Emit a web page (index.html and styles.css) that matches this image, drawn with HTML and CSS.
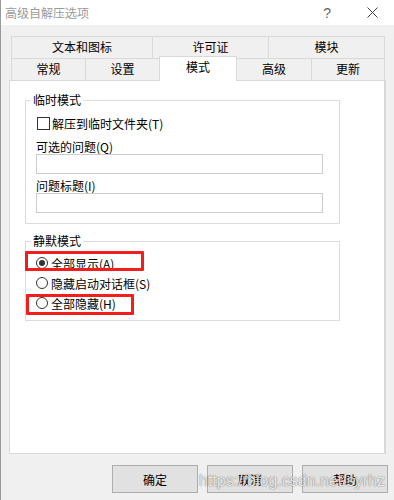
FILE: index.html
```html
<!DOCTYPE html>
<html lang="zh-CN">
<head>
  <meta charset="UTF-8" />
  <title>高级自解压选项</title>
  <link rel="stylesheet" href="styles.css">
</head>
<body>
  <div class="window">
    <div class="titlebar">
      <span class="title">高级自解压选项</span>
      <span class="help">?</span>
      <svg class="close" width="11" height="11" viewBox="0 0 11 11">
        <path d="M0.5 0.5 L10.5 10.5 M10.5 0.5 L0.5 10.5" stroke="#444" stroke-width="1" fill="none" />
      </svg>
    </div>

    <div class="dialog">
      <div class="tab-row">
        <div class="tab w141">文本和图标</div>
        <div class="tab w116">许可证</div>
        <div class="tab w116">模块</div>
      </div>
      <div class="tab-row">
        <div class="tab w74">常规</div>
        <div class="tab w74">设置</div>
        <div class="tab active">模式</div>
        <div class="tab w74">高级</div>
        <div class="tab w73">更新</div>
      </div>

      <div class="panel">
        <fieldset class="group">
          <legend>临时模式</legend>
          <div class="check-row">
            <span class="checkbox"></span>
            <span>解压到临时文件夹(T)</span>
          </div>
          <div class="field-label first">可选的问题(Q)</div>
          <div class="text-input"></div>
          <div class="field-label">问题标题(I)</div>
          <div class="text-input"></div>
        </fieldset>

        <fieldset class="group silent">
          <legend>静默模式</legend>
          <div class="radio-row">
            <span class="radio checked"></span>
            <span>全部显示(A)</span>
            <span class="mark mark-a"></span>
          </div>
          <div class="radio-row">
            <span class="radio"></span>
            <span>隐藏启动对话框(S)</span>
          </div>
          <div class="radio-row">
            <span class="radio"></span>
            <span>全部隐藏(H)</span>
            <span class="mark mark-h"></span>
          </div>
        </fieldset>
      </div>

      <div class="buttons">
        <button>确定</button>
        <button>取消</button>
        <button>帮助</button>
      </div>
    </div>

    <!-- blog watermark stamped over the screenshot -->
    <div class="watermark">https://blog.csdn.net/syrhz</div>
  </div>
</body>
</html>
```

FILE: styles.css
```css
body {
  margin: 0;
  font-family: "Noto Sans CJK SC", "Liberation Sans", sans-serif;
  font-size: 12px;
  color: #000;
}
.window {
  position: relative;
  width: 394px;
  height: 500px;
  box-sizing: border-box;
  border-left: 1px solid #9a9a9a;
  background: #f0f0f0;
  overflow: hidden;
}
.titlebar {
  height: 25px;
  background: #fff;
  display: flex;
  align-items: center;
  padding-left: 4px;
}
.title {
  flex: 1;
  color: #9a9a9a;
  line-height: 16px;
}
.help {
  font-family: "Liberation Sans", sans-serif;
  font-size: 14px;
  color: #666;
  margin-right: 36px;
}
.close {
  margin-right: 16px;
}
.dialog {
  padding: 11px 0 0 8px;
}
.tab-row {
  display: flex;
  margin-left: 2px;
  width: 373px;
  height: 22px;
  border-right: 1px solid #d9d9d9;
}
.tab {
  box-sizing: border-box;
  height: 22px;
  border-top: 1px solid #d9d9d9;
  border-left: 1px solid #d9d9d9;
  text-align: center;
  line-height: 20px;
}
.w141 { width: 141px; }
.w116 { width: 116px; }
.w74 { width: 74px; }
.w73 { width: 73px; }
.tab.active {
  position: relative;
  z-index: 1;
  width: 78px;
  height: 25px;
  margin-top: -2px;
  margin-bottom: -1px;
  background: #fff;
  border-right: 1px solid #d9d9d9;
}
.tab.active + .tab {
  border-left: none;
}
.panel {
  width: 377px;
  height: 374px;
  box-sizing: border-box;
  background: #fff;
  border: 1px solid #d9d9d9;
  border-right-width: 2px;
  padding: 11px 0 0 15px;
}
.group {
  margin: 0;
  width: 315px;
  box-sizing: border-box;
  border: 1px solid #dcdcdc;
  padding: 0 10px 10px 10px;
}
.group legend {
  margin-left: -5px;
  padding: 0 2px;
  line-height: 16px;
}
.check-row {
  display: flex;
  align-items: center;
  height: 16px;
  margin-top: 7px;
}
.checkbox {
  width: 11px;
  height: 11px;
  border: 1px solid #333;
  margin: 0 2px 0 1px;
}
.field-label {
  height: 15px;
  line-height: 15px;
  margin-top: 4px;
}
.field-label.first {
  margin-top: 8px;
}
.text-input {
  width: 287px;
  height: 20px;
  box-sizing: border-box;
  border: 1px solid #cccccc;
}
.group.silent {
  margin-top: 9px;
  padding-bottom: 7px;
}
.radio-row {
  position: relative;
  display: flex;
  align-items: center;
  height: 20px;
}
.radio-row:first-of-type {
  margin-top: 4px;
}
.radio {
  width: 10px;
  height: 10px;
  border: 1px solid #333;
  border-radius: 50%;
  margin-right: 3px;
  display: flex;
  align-items: center;
  justify-content: center;
}
.radio.checked::after {
  content: "";
  width: 6px;
  height: 6px;
  border-radius: 50%;
  background: #333;
}
.mark {
  position: absolute;
  border: 3px solid #f21d1d;
  border-radius: 1px;
  box-sizing: border-box;
}
.mark-a {
  left: -11px;
  top: -2px;
  width: 119px;
  height: 20px;
}
.mark-h {
  left: -10px;
  top: 1px;
  width: 108px;
  height: 21px;
}
.buttons {
  display: flex;
  justify-content: flex-end;
  gap: 9px;
  margin-top: 11px;
  padding-right: 6px;
}
button {
  width: 86px;
  height: 28px;
  background: #e1e1e1;
  border: 1px solid #adadad;
  font-family: "Noto Sans CJK SC", "Liberation Sans", sans-serif;
  font-size: 12px;
  color: #000;
  padding: 0;
}
.watermark {
  position: absolute;
  left: 198px;
  top: 472px;
  font-family: "Liberation Sans", sans-serif;
  font-size: 16px;
  line-height: 18px;
  color: rgba(255, 255, 255, 0.85);
  text-shadow: 0 0 1px rgba(0, 0, 0, 0.55), 0 0 2px rgba(0, 0, 0, 0.2);
}
```
